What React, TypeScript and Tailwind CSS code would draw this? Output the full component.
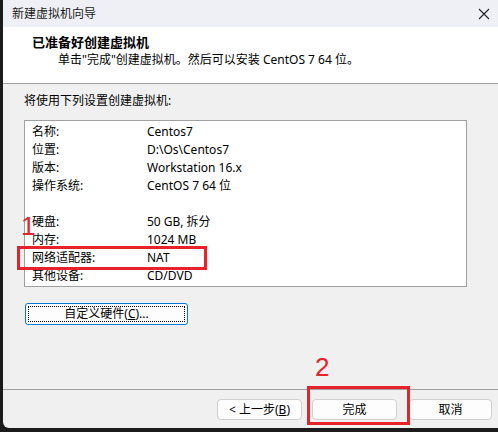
import React from 'react';

const rows: [string, string][] = [
  ['名称:', 'Centos7'],
  ['位置:', 'D:\\Os\\Centos7'],
  ['版本:', 'Workstation 16.x'],
  ['操作系统:', 'CentOS 7 64 位'],
  ['', ''],
  ['硬盘:', '50 GB, 拆分'],
  ['内存:', '1024 MB'],
  ['网络适配器:', 'NAT'],
  ['其他设备:', 'CD/DVD'],
];

const font = { fontFamily: '"Noto Sans", "Noto Sans CJK SC", sans-serif' };

export default function App() {
  return (
    <div
      className="w-[498px] h-[432px] bg-[#1b1b1b] pl-[3px] pb-[4px] overflow-hidden text-[12px] text-black"
      style={font}
    >
      <div className="relative flex flex-col h-full bg-[#f0f0f0] rounded-bl-[6px] overflow-hidden">
        {/* Title bar */}
        <div className="h-[27px] shrink-0 bg-[#eef0f5] flex items-center justify-between pl-[9px] pr-[7px]">
          <span className="text-[12px] text-[#1a1a1a]">新建虚拟机向导</span>
          <svg width="12" height="12" viewBox="0 0 12 12" className="mr-[1px]">
            <path d="M1 1 L11 11 M11 1 L1 11" stroke="#222" strokeWidth="1.1" />
          </svg>
        </div>

        {/* Header */}
        <div className="h-[57px] shrink-0 bg-white border-b border-[#a0a0a0] pl-[29px] pt-[6px]">
          <div className="font-bold text-[13px] leading-[18px]">已准备好创建虚拟机</div>
          <div className="pl-[26px] leading-[18px]">单击"完成"创建虚拟机。然后可以安装 CentOS 7 64 位。</div>
        </div>

        {/* Body */}
        <div className="flex-1 flex flex-col pl-[21px] pt-[8px]">
          <div className="leading-[18px]">将使用下列设置创建虚拟机:</div>
          <div className="mt-[10px] w-[443px] h-[167px] bg-white border border-[#a0a0a0] pl-[7px] pt-[2px]">
            {rows.map(([k, v], i) => (
              <div key={i} className="flex h-[18px] leading-[18px]">
                <span className="w-[115px]">{k}</span>
                <span>{v}</span>
              </div>
            ))}
          </div>
          <button className="mt-[16px] ml-[1px] w-[163px] h-[22px] rounded-[3px] border border-[#0078d4] bg-[#fdfdfd] p-[2px]">
            <span className="flex h-full items-center justify-center border border-dotted border-black">
              自定义硬件(<span className="underline">C</span>)...
            </span>
          </button>
        </div>

        {/* Footer */}
        <div className="h-[39px] shrink-0 border-t border-[#a0a0a0] flex justify-end items-start pr-[6px] pt-[9px]">
          <button className="w-[85px] h-[21px] rounded-[4px] border border-[#d0d0d0] bg-[#fdfdfd]">
            &lt; 上一步(<span className="underline">B</span>)
          </button>
          <button className="ml-[10px] w-[85px] h-[21px] rounded-[4px] border border-[#d0d0d0] bg-[#fdfdfd]">完成</button>
          <button className="ml-[12px] w-[83px] h-[21px] rounded-[4px] border border-[#d0d0d0] bg-[#fdfdfd]">取消</button>
        </div>

        {/* Annotations */}
        <div className="absolute left-[14px] top-[246px] w-[190px] h-[24px] border-[3px] border-[#e8222b]" />
        <div className="absolute left-[18px] top-[211px] text-[26px] leading-[30px] text-[#e8222b]" style={{ fontFamily: '"Liberation Sans", sans-serif' }}>
          1
        </div>
        <div className="absolute left-[304px] top-[386px] w-[103px] h-[39px] border-[3px] border-[#e8222b]" />
        <div className="absolute left-[312px] top-[352px] text-[26px] leading-[30px] text-[#e8222b]" style={{ fontFamily: '"Liberation Sans", sans-serif' }}>
          2
        </div>
      </div>
    </div>
  );
}
